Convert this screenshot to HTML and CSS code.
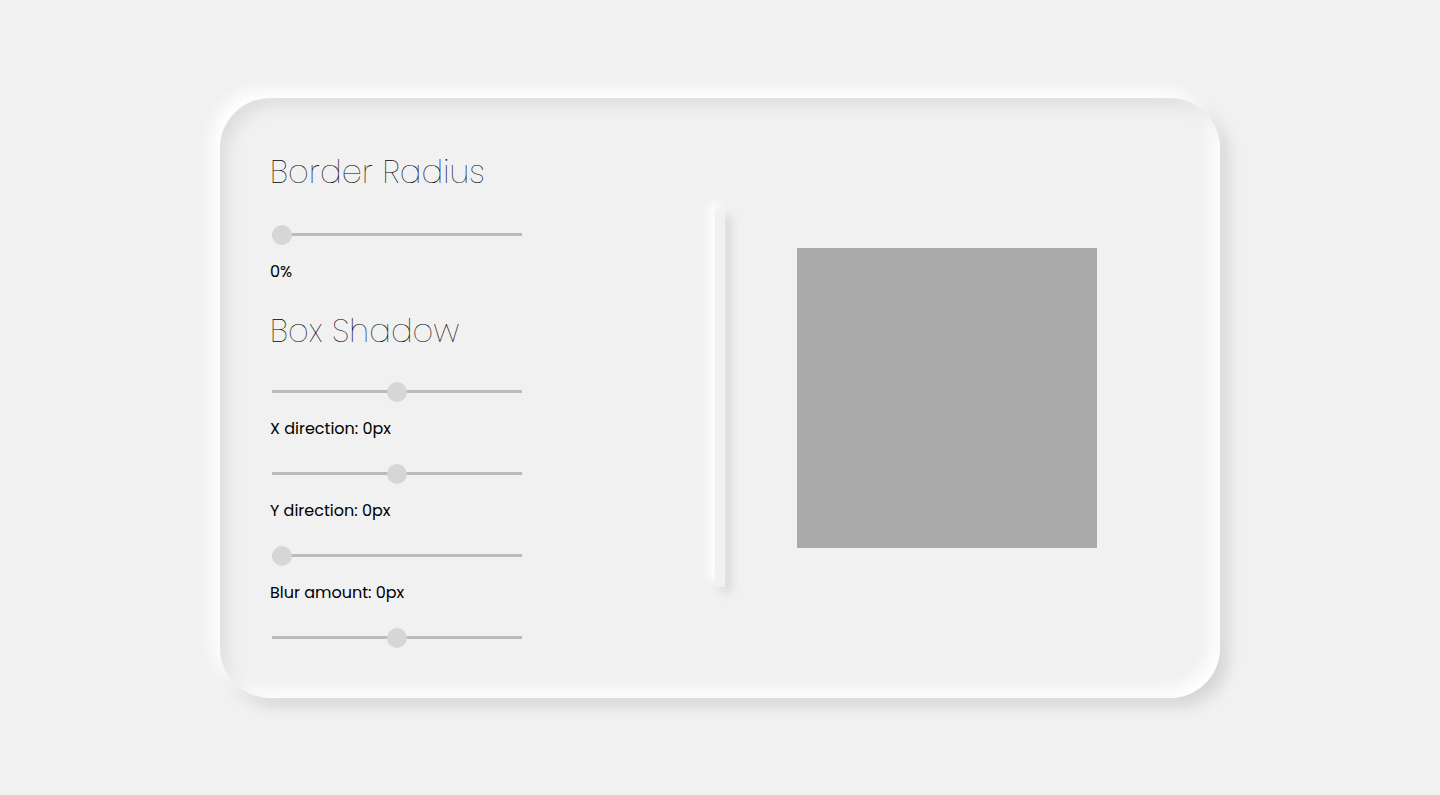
FILE: index.html
```html
<!DOCTYPE html>
<html lang="en">
<head>
<meta charset="utf-8">
<title>Neumorphic Box Generator</title>
<link rel="stylesheet" href="styles.css">
</head>
<body>
<main class="card">
  <section class="controls">
    <h2 class="heading">Border Radius</h2>
    <input class="range range-top" type="range" min="0" max="50" value="0">
    <p class="label">0%</p>
    <h2 class="heading">Box Shadow</h2>
    <input class="range range-sub" type="range" min="-50" max="50" value="0">
    <p class="label">X direction: 0px</p>
    <input class="range" type="range" min="-50" max="50" value="0">
    <p class="label">Y direction: 0px</p>
    <input class="range" type="range" min="0" max="50" value="0">
    <p class="label">Blur amount: 0px</p>
    <input class="range" type="range" min="-50" max="50" value="0">
  </section>
  <div class="divider"></div>
  <section class="preview">
    <div class="box"></div>
  </section>
</main>
</body>
</html>
```

FILE: styles.css
```css
* { box-sizing: border-box; }

html, body {
  margin: 0;
  height: 100%;
}

body {
  background: #f1f1f1;
  font-family: "Poppins", "Inter", "Lato", sans-serif;
  color: #000;
  display: flex;
  align-items: center;
  justify-content: center;
}

.card {
  width: 1000px;
  height: 600px;
  border-radius: 50px;
  background: #f1f1f1;
  padding: 50px;
  display: flex;
  align-items: center;
  box-shadow:
    -8px -8px 16px #ffffff,
    8px 8px 16px rgba(0, 0, 0, 0.12),
    inset 8px 8px 16px rgba(0, 0, 0, 0.08),
    inset -8px -8px 16px #ffffff;
}

.controls {
  width: 445px;
  height: 500px;
  display: flex;
  flex-direction: column;
  align-items: flex-start;
}

.heading {
  margin: 0;
  font-size: 32px;
  font-weight: 200;
  line-height: 48px;
  height: 48px;
  letter-spacing: 0.2px;
  flex-shrink: 0;
}

.label {
  margin: 15px 0 23px;
  font-size: 16px;
  font-weight: 400;
  line-height: 24px;
  height: 24px;
  flex-shrink: 0;
}

.range {
  -webkit-appearance: none;
  appearance: none;
  width: 250px;
  height: 20px;
  margin: 0 0 0 2px;
  background: transparent;
  flex-shrink: 0;
}

.range-top {
  margin-top: 29px;
}

.range-sub {
  margin-top: 27px;
}

.range::-webkit-slider-runnable-track {
  height: 3px;
  background: #bbbbbb;
  border: none;
}

.range::-webkit-slider-thumb {
  -webkit-appearance: none;
  appearance: none;
  width: 20px;
  height: 20px;
  border-radius: 50%;
  background: #d6d6d6;
  border: none;
  margin-top: -8.5px;
}

.divider {
  width: 10px;
  height: 378px;
  background: #f1f1f1;
  flex-shrink: 0;
  box-shadow:
    -6px -6px 10px #ffffff,
    6px 6px 10px rgba(0, 0, 0, 0.1);
}

.preview {
  width: 444px;
  height: 500px;
  display: flex;
  align-items: center;
  justify-content: center;
}

.box {
  width: 300px;
  height: 300px;
  background: #aaaaaa;
}
```
